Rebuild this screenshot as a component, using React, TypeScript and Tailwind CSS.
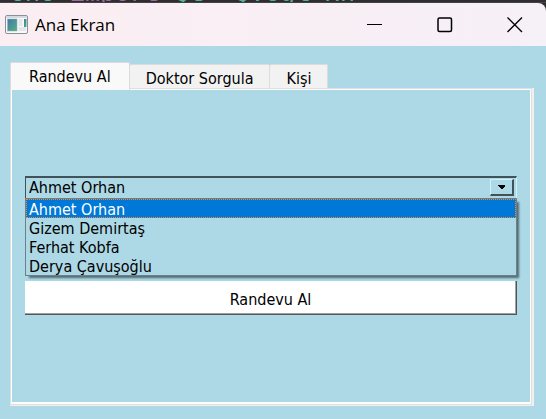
import { useState } from "react";

const doctors = ["Ahmet Orhan", "Gizem Demirtaş", "Ferhat Kobfa", "Derya Çavuşoğlu"];
const tabs = ["Randevu Al", "Doktor Sorgula", "Kişi"];

function AppIcon() {
  return (
    <svg width="24" height="20" viewBox="0 0 24 20" aria-hidden="true">
      <defs>
        <linearGradient id="screen" x1="0" y1="0" x2="1" y2="1">
          <stop offset="0" stopColor="#3f78b0" />
          <stop offset="1" stopColor="#5cb07c" />
        </linearGradient>
      </defs>
      <rect x="0.5" y="0.5" width="22" height="18" rx="1.5" fill="#f8f9fa" stroke="#8b9096" />
      <rect x="1" y="1" width="21" height="2" fill="#d5dae0" />
      <rect x="2.5" y="4" width="9.5" height="12" fill="url(#screen)" stroke="#8fb0b0" strokeWidth="0.5" />
      <rect x="13.5" y="4" width="4" height="7" fill="#e4e7ea" />
      <rect x="13.5" y="12" width="7.5" height="4" fill="#e4e7ea" />
      <rect x="19" y="4" width="2.5" height="8" fill="url(#screen)" />
    </svg>
  );
}

function EditorStrip() {
  return (
    <div aria-hidden="true" className="flex h-[3px] shrink-0 items-end overflow-hidden border-b border-[#444244] bg-[#2f2d2f] pl-[10px] font-['Liberation_Mono',monospace] text-[25px] leading-[14px] whitespace-pre text-[#4fb3a0]">
      <span>ene <span className="text-[#a06a9c]">import</span> Qt  QVegl xn</span>
    </div>
  );
}

function TitleBar() {
  return (
    <header className="flex h-[43px] shrink-0 items-center gap-2 rounded-tr-lg bg-[linear-gradient(90deg,#fbeef2,#f6f0f7)] pl-[5px] text-black">
      <AppIcon />
      <h1 className="-ml-[2px] flex-1 font-['Open_Sans','Noto_Sans',sans-serif] text-[17px] leading-6">Ana Ekran</h1>
      <button aria-label="Simge durumuna küçült" className="grid h-full w-[62px] place-items-center">
        <svg width="16" height="16" stroke="currentColor"><path d="M0 7.5H15" /></svg>
      </button>
      <button aria-label="Ekranı kapla" className="grid h-full w-[62px] place-items-center">
        <svg width="16" height="16" fill="none" stroke="currentColor" strokeWidth="1.5"><rect x="1" y="1" width="13.5" height="13.5" rx="1.5" /></svg>
      </button>
      <button aria-label="Kapat" className="grid h-full w-[62px] place-items-center">
        <svg width="16" height="16" fill="none" stroke="currentColor" strokeWidth="1.3"><path d="M.5 .5L15 15M15 .5L.5 15" /></svg>
      </button>
    </header>
  );
}

function DoctorSelect() {
  const [doctor, setDoctor] = useState(doctors[0]);
  return (
    <div className="relative">
      <select
        aria-label="Doktor"
        value={doctor}
        onChange={(e) => setDoctor(e.target.value)}
        className="block h-[23px] w-full appearance-none border border-t-2 border-[#3f5358] border-r-[#c8f4ff] border-b-[#c8f4ff] bg-[#add8e6] pl-[3px] leading-5 outline-none"
      >
        {doctors.map((name) => <option key={name}>{name}</option>)}
      </select>
      <span className="pointer-events-none absolute top-[3px] right-[3px] grid h-[17px] w-6 place-items-center border-2 border-t border-l border-[#3f5358] border-t-[#c8f4ff] border-l-[#c8f4ff]">
        <svg width="7" height="4" shapeRendering="crispEdges"><path d="M0 0H7V1L4 4H3L0 1Z" /></svg>
      </span>
      <ul role="listbox" aria-label="Doktor" className="absolute top-[22px] right-0 left-0 border border-[#6f7f86] bg-[#add8e6] shadow-[3px_3px_2px_-1px_rgba(40,60,70,0.7)]">
        {doctors.map((name) => (
          <li
            key={name}
            role="option"
            aria-selected={name === doctor}
            onClick={() => setDoctor(name)}
            className="h-[19px] border border-transparent pl-[2px] leading-[19px] aria-selected:border-dotted aria-selected:border-[#ff8728] aria-selected:bg-[#0078d7] aria-selected:text-white"
          >
            {name}
          </li>
        ))}
      </ul>
    </div>
  );
}

export default function App() {
  const [active, setActive] = useState(0);
  return (
    <div className="flex min-h-screen flex-col bg-[#2f2d2f] font-['DejaVu_Sans_Condensed','DejaVu_Sans',sans-serif] text-base text-black">
      <EditorStrip />
      <TitleBar />
      <main className="flex flex-1 flex-col bg-[#add8e6] pt-4 pr-3 pb-[13px] pl-[10px]">
        <div role="tablist" className="flex items-end">
          {tabs.map((tab, i) => (
            <button
              key={tab}
              role="tab"
              aria-selected={i === active}
              onClick={() => setActive(i)}
              className="h-6 rounded-t-xs border border-b-0 border-l-0 border-[#dcdcdc] bg-[#f2f2f2] px-4 pt-1 leading-5 first:border-l aria-selected:relative aria-selected:-mb-[2px] aria-selected:h-7 aria-selected:bg-[#f9f9f9] aria-selected:px-[18px] aria-selected:pt-0"
            >
              {tab}
            </button>
          ))}
        </div>
        <div className="flex flex-1 flex-col border-r-2 border-b border-[#f0f0f0]">
          <section role="tabpanel" className="flex flex-1 flex-col border border-[#e0e0e0]">
            <div className="flex-1 border border-b-2 border-[#fcfcfc] px-[13px] pt-[86px] pb-4">
              <DoctorSelect />
              <button className="mt-[82px] h-[34px] w-full border-r border-b border-[#555] bg-white pt-1 leading-5 shadow-[inset_-1px_-1px_#a0a0a0]">
                Randevu Al
              </button>
            </div>
          </section>
        </div>
      </main>
    </div>
  );
}
